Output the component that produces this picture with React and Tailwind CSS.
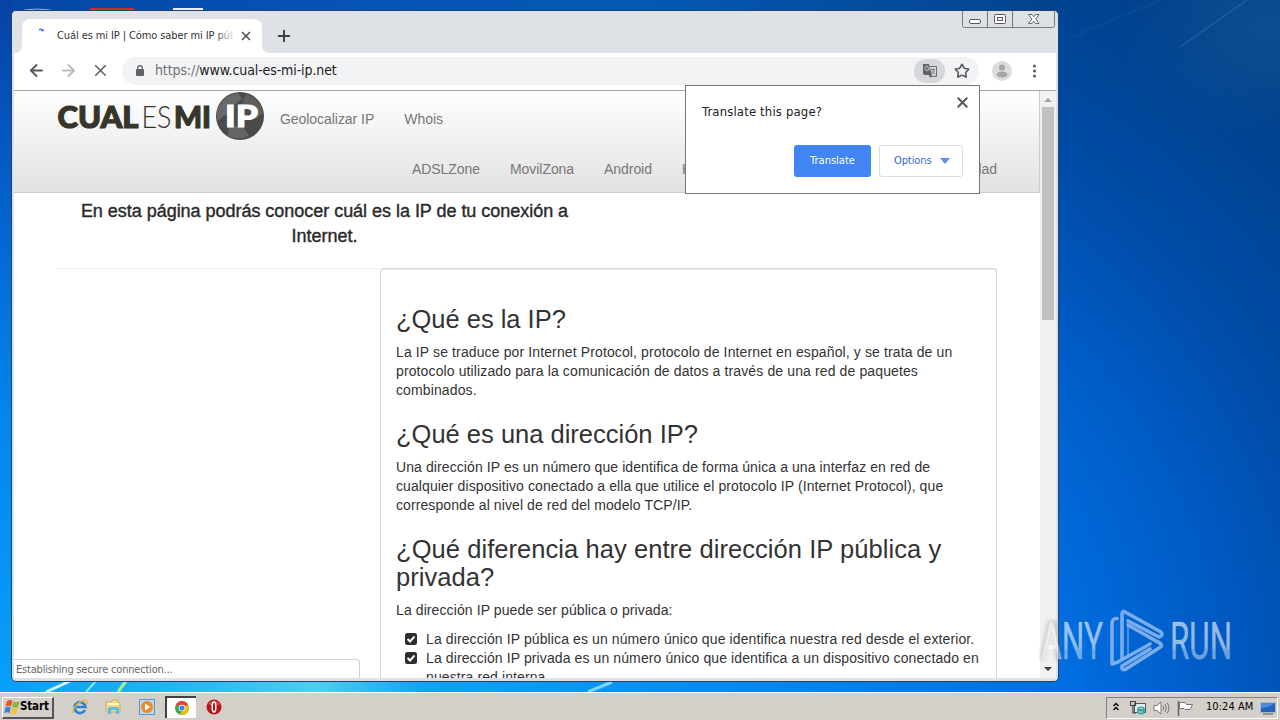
import React from 'react';
import { X, Plus, ArrowLeft, ArrowRight, Star } from 'lucide-react';

const Wallpaper = () => (
  <svg className="absolute inset-0" width="1280" height="692" viewBox="0 0 1280 692">
    <defs>
      <radialGradient id="sky" gradientUnits="userSpaceOnUse" cx="700" cy="700" r="830">
        <stop offset="0" stopColor="#0080f0" />
        <stop offset="0.44" stopColor="#006ee0" />
        <stop offset="0.6" stopColor="#005dc8" />
        <stop offset="0.8" stopColor="#004aa4" />
        <stop offset="1" stopColor="#00418c" />
      </radialGradient>
      <linearGradient id="top" x1="0" x2="1" y1="0" y2="0">
        <stop offset="0" stopColor="#0546a8" />
        <stop offset="0.35" stopColor="#0654b4" />
        <stop offset="0.6" stopColor="#0459b4" />
        <stop offset="1" stopColor="#04438c" />
      </linearGradient>
      <linearGradient id="left" x1="0" x2="0" y1="0" y2="1">
        <stop offset="0" stopColor="#0742a4" />
        <stop offset="0.3" stopColor="#0462cc" />
        <stop offset="0.6" stopColor="#0486ea" />
        <stop offset="1" stopColor="#089ffa" />
      </linearGradient>
      <linearGradient id="bottom" x1="0" x2="1" y1="0" y2="0">
        <stop offset="0" stopColor="#089ffa" />
        <stop offset="0.15" stopColor="#1fb2f2" />
        <stop offset="0.3" stopColor="#4fcdf2" />
        <stop offset="0.4" stopColor="#12a2f4" />
        <stop offset="0.7" stopColor="#0589f0" />
        <stop offset="1" stopColor="#006fe0" />
      </linearGradient>
      <radialGradient id="glow">
        <stop offset="0" stopColor="#2a6a9c" stopOpacity="0.3" />
        <stop offset="1" stopColor="#2a6a9c" stopOpacity="0" />
      </radialGradient>
    </defs>
    <rect width="1280" height="692" fill="url(#sky)" />
    <ellipse cx="1270" cy="30" rx="150" ry="110" fill="url(#glow)" />
    <rect width="1060" height="12" fill="url(#top)" />
    <rect width="12" height="692" fill="url(#left)" />
    <rect y="680" width="1060" height="12" fill="url(#bottom)" />
    <path d="M1180 47L1247 0" stroke="#5a8fc8" strokeOpacity="0.3" strokeWidth="1.5" />
    <path d="M1070 38L1160 0" stroke="#3a78b8" strokeOpacity="0.12" strokeWidth="2" />
    <path d="M46 692L70 681" stroke="#d8f4fc" strokeWidth="3" />
    <path d="M86 692L96 681" stroke="#8fe0f4" strokeWidth="2" />
    <path d="M118 692L126 681" stroke="#b4e88c" strokeWidth="3" />
    <path d="M588 692L612 682" stroke="#7fd4fa" strokeWidth="3" />
    <path d="M24 10Q37 8 50 10" stroke="#9ab4d8" fill="none" />
    <rect x="90" y="8" width="44" height="3" fill="#c8302c" />
    <rect x="173" y="8" width="30" height="3" fill="#e8eef4" />
  </svg>
);

const WindowButtons = () => (
  <svg className="absolute right-0 top-0" width="94" height="18" viewBox="0 0 94 18" fill="none" stroke="#777a82">
    <path d="M0.5 0V14.500Q0.500 16.500 2.500 16.500H90.500Q92.500 16.500 92.500 14.500V0M25.500 0V16.500M50.500 0V16.500" />
    <rect x="7.500" y="8.500" width="11" height="4" rx="1.500" fill="#fff" stroke="#55585f" />
    <rect x="32.500" y="3.500" width="11" height="9" rx="1" fill="#fff" stroke="#55585f" />
    <rect x="35.500" y="6.500" width="5" height="3" stroke="#55585f" />
    <path
      d="M66.500 3.500H70L71.800 5.800L73.500 3.500H77L73.800 8L77 12.500H73.500L71.800 10.200L70 12.500H66.500L69.800 8Z"
      fill="#fff"
      stroke="#666970"
    />
  </svg>
);

const TabStrip = () => (
  <div className="relative h-[42px] bg-[#dee1e6] flex items-end">
    <div className="relative ml-2 w-[240px] h-[34px] bg-white rounded-t-lg flex items-center">
      <svg className="ml-[13px] mb-[2px] shrink-0" width="14" height="14" viewBox="0 0 14 14" fill="none">
        <path d="M4 1.500H7V2.500H9" stroke="#3b78e7" strokeWidth="1.600" />
      </svg>
      <span className="ml-2 w-[176px] overflow-hidden whitespace-nowrap font-['DejaVu_Sans_Condensed','DejaVu_Sans',sans-serif] text-[11px] tracking-[-0.1px] text-[#333]">
        Cuál es mi IP | Cómo saber mi IP púb
      </span>
      <div className="absolute left-[192px] top-2 h-5 w-[22px] bg-linear-to-r from-white/0 to-white" />
      <X className="ml-[6px] shrink-0" size={14} strokeWidth={3} color="#55585c" />
      <svg className="absolute -left-2 bottom-0" width="8" height="8"><path d="M8 0V8H0Q8 8 8 0Z" fill="#fff" /></svg>
      <svg className="absolute -right-2 bottom-0" width="8" height="8"><path d="M0 0V8H8Q0 8 0 0Z" fill="#fff" /></svg>
    </div>
    <Plus className="ml-[13px] mb-[8px]" size={18} strokeWidth={2.6} color="#3c4043" />
    <WindowButtons />
  </div>
);

const TranslateIcon = () => (
  <svg width="16" height="16" viewBox="0 0 16 16" fill="none">
    <path d="M7.500 3.500H14.500V13.500H9" stroke="#6a6d71" />
    <path d="M1 1H7L10 12H3Q1 12 1 10Z" fill="#5f6368" />
    <path d="M7.300 5H5.300M7.300 5A2.200 2.200 0 1 1 6.300 3.500" stroke="#d4d6d9" />
    <path d="M9 6.500H13M11 5.500V6.500M12.500 6.500Q12 9 10 10.500M10 8L13 11.500" stroke="#777a7e" />
    <path d="M7 12H10L8 15Z" fill="#5f6368" />
  </svg>
);

const Toolbar = () => (
  <div className="h-[37px] pb-[2px] bg-white flex items-center">
    <ArrowLeft className="ml-[13px]" size={19} strokeWidth={2.4} color="#55585c" />
    <ArrowRight className="ml-[13px]" size={19} strokeWidth={2.4} color="#b9bbbd" />
    <X className="ml-[13px]" size={19} strokeWidth={2.1} color="#5f6368" />
    <div className="ml-[12px] w-[857px] h-[28px] rounded-full bg-[#f1f3f4] flex items-center">
      <svg className="ml-[13px]" width="10" height="14" viewBox="0 0 10 14">
        <rect x="1" y="5" width="8" height="7" rx="1" fill="#5f6368" />
        <path d="M2.700 5.500V4a2.300 2.300 0 0 1 4.600 0V5.500" stroke="#5f6368" strokeWidth="1.300" fill="none" />
      </svg>
      <span className="ml-[10px] whitespace-nowrap font-['DejaVu_Sans_Condensed','DejaVu_Sans',sans-serif] text-[14px] tracking-[-0.11px] text-[#1c1c1c]">
        <span className="text-[#6f7276]">https://</span>www.cual-es-mi-ip.net
      </span>
      <span className="ml-auto w-[31px] h-[24px] rounded-full bg-[#d5d7da] flex items-center justify-center">
        <TranslateIcon />
      </span>
      <Star className="ml-[9px] mr-[9px]" size={16} strokeWidth={2.4} color="#55585c" />
    </div>
    <svg className="ml-[13px]" width="20" height="20" viewBox="0 0 20 20">
      <circle cx="10" cy="10" r="10" fill="#dcdcdc" />
      <circle cx="10" cy="6.500" r="3" fill="#a5a5a5" />
      <ellipse cx="10" cy="13.500" rx="5.500" ry="3" fill="#a5a5a5" />
    </svg>
    <svg className="ml-[20px]" width="5" height="14" viewBox="0 0 5 14" fill="#5f6368">
      <circle cx="2.500" cy="2" r="1.600" />
      <circle cx="2.500" cy="7" r="1.600" />
      <circle cx="2.500" cy="12" r="1.600" />
    </svg>
  </div>
);

const Logo = () => (
  <svg className="shrink-0" width="212" height="50" viewBox="0 0 212 50">
    <g fontFamily="Lato, sans-serif" fontSize="31" fill="#35352a">
      <text x="2.500" y="36.500" fontWeight="900" stroke="#35352a" strokeWidth="1.200" textLength="81" lengthAdjust="spacingAndGlyphs">CUAL</text>
      <text x="86.500" y="36.500" fontWeight="300" textLength="30" lengthAdjust="spacingAndGlyphs">ES</text>
      <text x="119" y="36.500" fontWeight="900" stroke="#35352a" strokeWidth="1.200" textLength="37" lengthAdjust="spacingAndGlyphs">MI</text>
    </g>
    <circle cx="185" cy="25" r="24" fill="#4a4a4a" />
    <path d="M164 15Q171 3 183 2L187 8L179 14L177 26L170 24L163 30Q160 22 164 15Z" fill="#686868" />
    <path d="M191 3Q206 8 208 22L201 28L193 18L187 12Z" fill="#5e5e5e" />
    <path d="M174 34L189 37L194 45Q183 50 173 45Z" fill="#646464" />
    <text x="170" y="36" fontFamily="Lato, sans-serif" fontWeight="900" fontSize="30" fill="#fff" stroke="#fff" textLength="33" lengthAdjust="spacingAndGlyphs">IP</text>
  </svg>
);

const SiteHeader = () => (
  <div className="h-[102px] bg-linear-to-b from-white to-[#e2e2e2] border-b border-r border-[#ccc] text-[14px] text-[#777]">
    <div className="h-[51px] pl-[41px] flex items-start">
      <Logo />
      <span className="ml-[13px] mt-[18px] leading-[20px] tracking-[-0.05px]">Geolocalizar IP</span>
      <span className="ml-[30px] mt-[18px] leading-[20px]">Whois</span>
    </div>
    <div className="h-[50px] pl-[398px] pr-[42px] pt-[17px] flex gap-[30px] leading-[20px] tracking-[-0.06px] whitespace-nowrap">
      <span>ADSLZone</span>
      <span>MovilZona</span>
      <span>Android</span>
      <span>HardZone</span>
      <span className="ml-auto">Seguridad</span>
    </div>
  </div>
);

const Check = () => (
  <svg className="mt-[3px] mr-[9px] shrink-0" width="12" height="12" viewBox="0 0 12 12">
    <rect width="12" height="12" rx="2.500" fill="#2d2d2d" />
    <path d="M2.500 6L5 8.500L9.500 3.500" fill="none" stroke="#fff" strokeWidth="1.900" />
  </svg>
);

const Article = () => (
  <div className="w-[617px] h-[420px] shrink-0 rounded-t-[4px] border border-b-0 border-[#d6d6d6] shadow-[inset_0_1px_0_#ececec] pl-[15px] pt-[36px] text-[14px] leading-[19px] tracking-[0.122px] text-[#333] whitespace-nowrap">
    <h2 className="text-[25.5px] leading-[28px] tracking-[-0.02px]">¿Qué es la IP?</h2>
    <p className="mt-[10px]">
      La IP se traduce por Internet Protocol, protocolo de Internet en español, y se trata de un
      <br />
      protocolo utilizado para la comunicación de datos a través de una red de paquetes
      <br />
      combinados.
    </p>
    <h2 className="mt-[20px] text-[25.5px] leading-[28px] tracking-[0px]">¿Qué es una dirección IP?</h2>
    <p className="mt-[10px] tracking-[0.09px]">
      Una dirección IP es un número que identifica de forma única a una interfaz en red de
      <br />
      cualquier dispositivo conectado a ella que utilice el protocolo IP (Internet Protocol), que
      <br />
      corresponde al nivel de red del modelo TCP/IP.
    </p>
    <h2 className="mt-[20px] text-[25.5px] leading-[28px] tracking-[0.06px]">
      ¿Qué diferencia hay entre dirección IP pública y
      <br />
      privada?
    </h2>
    <p className="mt-[10px] tracking-[0.1px]">La dirección IP puede ser pública o privada:</p>
    <ul className="mt-[10px] ml-[9px] tracking-[0.105px]">
      <li className="flex">
        <Check />
        <span>La dirección IP pública es un número único que identifica nuestra red desde el exterior.</span>
      </li>
      <li className="flex">
        <Check />
        <span>
          La dirección IP privada es un número único que identifica a un dispositivo conectado en
          <br />
          nuestra red interna.
        </span>
      </li>
    </ul>
  </div>
);

const Scrollbar = () => (
  <div className="w-[16px] bg-[#f1f1f1] flex flex-col items-center shrink-0">
    <svg className="shrink-0" width="16" height="16"><path d="M4 11L8 7L12 11Z" fill="#a3a3a3" /></svg>
    <div className="w-[12px] h-[213px] bg-[#c1c1c1]" />
    <svg className="mt-auto shrink-0" width="16" height="18"><path d="M4 7L8 11L12 7Z" fill="#404040" /></svg>
  </div>
);

const TranslateBubble = () => (
  <div className="absolute left-[685px] top-[85px] w-[295px] h-[109px] bg-white border border-[#777] font-['DejaVu_Sans_Condensed','DejaVu_Sans',sans-serif]">
    <div className="flex justify-between pl-[16px] pr-[8px] pt-[8px]">
      <span className="mt-[9px] text-[13px] leading-[18px] tracking-[0.15px] text-[#222]">Translate this page?</span>
      <X size={17} strokeWidth={2.7} color="#55585c" />
    </div>
    <div className="flex justify-end gap-[8px] pr-[16px] mt-[24px] text-[11px]">
      <span className="w-[77px] h-[32px] rounded-[3px] bg-[#4285f4] text-white flex items-center justify-center pt-[1px]">Translate</span>
      <span className="w-[84px] h-[32px] rounded-[3px] border border-[#dadce0] text-[#3367d6] flex items-center pl-[14px] tracking-[-0.1px]">
        Options
        <svg className="ml-[9px]" width="10" height="6"><path d="M0 0H10L5 6Z" fill="#5c93e8" /></svg>
      </span>
    </div>
  </div>
);

const BrowserWindow = () => (
  <div className="relative ml-[11px] mt-[10px] w-[1048px] h-[672px] rounded-[5px] border border-[#22436e] bg-[#dee1e6] px-[2px] overflow-hidden flex flex-col">
    <TabStrip />
    <Toolbar />
    <div className="h-[588px] border-t border-[#a5a5a5] flex bg-white">
      <div className="relative w-[1026px] h-[587px] overflow-hidden">
        <SiteHeader />
        <div className="pl-[42px]">
          <h1 className="w-[537px] h-[75px] pt-[6px] text-center text-[18px] leading-[25px] tracking-[-0.03px] text-[#2a2a2a] [-webkit-text-stroke:0.4px_#2a2a2a]">
            En esta página podrás conocer cuál es la IP de tu conexión a
            <br />
            Internet.
          </h1>
          <div className="flex">
            <div className="w-[324px] shrink-0 border-t border-[#eee]" />
            <Article />
          </div>
        </div>
        <div className="absolute left-0 bottom-0 w-[346px] h-[19px] bg-white border-t border-r border-[#d0d0d0] rounded-tr-[4px] pl-[2px] font-['DejaVu_Sans_Condensed','DejaVu_Sans',sans-serif] text-[11px] leading-[19px] tracking-[-0.2px] text-[#666]">
          Establishing secure connection...
        </div>
      </div>
      <Scrollbar />
    </div>
  </div>
);

const Watermark = () => (
  <svg className="absolute left-[1030px] top-[600px]" width="210" height="80" viewBox="0 0 210 80">
    <defs>
      <linearGradient id="wm" x1="0" x2="0" y1="0" y2="1">
        <stop offset="0" stopColor="#fff" stopOpacity="0.62" />
        <stop offset="0.6" stopColor="#fff" stopOpacity="0.55" />
        <stop offset="0.65" stopColor="#fff" stopOpacity="0.42" />
        <stop offset="1" stopColor="#fff" stopOpacity="0.42" />
      </linearGradient>
      <filter id="soft" x="-20%" y="-20%" width="140%" height="140%">
        <feGaussianBlur stdDeviation="2" />
      </filter>
    </defs>
    <path d="M12 60L20 23H25L28 60" fill="none" stroke="#888" strokeOpacity="0.45" strokeWidth="4" filter="url(#soft)" />
    <g fontFamily="Roboto, sans-serif" fontSize="51" fill="url(#wm)" stroke="#fff" strokeOpacity="0.15">
      <text x="11" y="59" textLength="62" lengthAdjust="spacingAndGlyphs">ANY</text>
      <text x="140" y="59" textLength="62" lengthAdjust="spacingAndGlyphs">RUN</text>
    </g>
    <g fill="none" stroke="#8fb9ee" strokeOpacity="0.85" strokeWidth="3.600" strokeLinejoin="round" strokeLinecap="round">
      <path d="M87 18.500Q82 18 82 24V64L88 62L120 44" />
      <path d="M92 58V14Q92 10 96 12.500L131 32Q134 35 129 37L98 21" />
      <path d="M98 26V57" strokeOpacity="0.5" strokeWidth="2" />
      <path d="M98 25L126 41Q135 45 129 48L96 69Q91 71 92 66L120 49" />
    </g>
  </svg>
);

const TaskIcons = () => (
  <>
    <svg className="ml-[18px]" width="16" height="16" viewBox="0 0 16 16" fill="none">
      <path d="M13 11A5.500 5.500 0 1 1 13.500 8H4" stroke="#2786d8" strokeWidth="2.600" />
      <path d="M1 14C-1 10 9 0 14.500 1.500C15.500 2 15 4 14 5" stroke="#e4b93c" strokeWidth="1.400" />
    </svg>
    <svg className="ml-[17px]" width="16" height="16" viewBox="0 0 16 16">
      <path d="M1 3H6L8 1H13V4H15V13H1Z" fill="#f0d984" stroke="#c8b05c" />
      <path d="M2 5H14" stroke="#fff6c4" strokeWidth="2" />
      <path d="M3 15V10Q3 8 5 8H12Q14 8 14 10V15H11V11H6V15Z" fill="#65b8e0" />
    </svg>
    <svg className="ml-[18px]" width="16" height="16" viewBox="0 0 16 16">
      <rect x="0.500" y="0.500" width="15" height="15" fill="#b9d8f2" stroke="#5d97cd" />
      <circle cx="8" cy="8" r="6" fill="#ef8a1d" />
      <path d="M6 4.500L11.500 8L6 11.500Z" fill="#fff" />
    </svg>
    <div className="ml-[10px] w-[31px] h-[22px] bg-white border-t-2 border-l-2 border-[#404040] flex items-center justify-center">
      <svg width="14" height="14" viewBox="0 0 14 14">
        <circle cx="7" cy="7" r="7" fill="#34a853" />
        <path d="M7 7L1 3.500A7 7 0 0 1 13 3.500Z" fill="#ea4335" />
        <path d="M7 7L13 3.500A7 7 0 0 1 7 14L5 13L9 8Z" fill="#fbbc05" />
        <circle cx="7" cy="7" r="3.300" fill="#fff" />
        <circle cx="7" cy="7" r="2.600" fill="#4285f4" />
      </svg>
    </div>
    <svg className="ml-[10px]" width="16" height="16" viewBox="0 0 16 16">
      <circle cx="8" cy="8" r="7.500" fill="#b5181c" />
      <path d="M2 5Q8 -2 14 5Q8 8 2 5Z" fill="#d8504c" />
      <ellipse cx="8" cy="8" rx="1.800" ry="5" fill="#a81216" stroke="#fff" strokeWidth="1.500" />
    </svg>
  </>
);

const Taskbar = () => (
  <div className="relative h-[28px] bg-[#d4cfc8] border-t border-white flex items-center">
    <div className="ml-[2px] mt-[2px] w-[52px] h-[22px] border-t border-l border-t-white border-l-white border-b-2 border-r-2 border-b-[#555] border-r-[#555] flex items-center">
      <svg className="ml-[1px] shrink-0" width="16" height="16" viewBox="0 0 16 16">
        <path d="M3 2Q6 0 8.500 2L7 7.500Q4.500 6 1.500 7.500Z" fill="#e2582a" />
        <path d="M9.500 2.500Q12 4 15.500 2.500L14 8Q11 9.500 8 8Z" fill="#7dba3c" />
        <path d="M1.500 8.500Q4 7 6.800 8.500L5.500 14Q3 12.500 0 14Z" fill="#3b82d0" />
        <path d="M7.800 9Q10.500 10.500 13.700 9L12.300 14.500Q9.500 16 6.300 14.500Z" fill="#f5c230" />
      </svg>
      <span className="font-['DejaVu_Sans_Condensed','DejaVu_Sans',sans-serif] font-bold text-[11.5px] tracking-[-0.15px] text-black">Start</span>
    </div>
    <TaskIcons />
    <div className="ml-auto mr-[2px] mt-[2px] w-[172px] h-[22px] border-t border-l border-t-[#808080] border-l-[#808080] border-b border-r border-b-white border-r-white flex items-center">
      <svg className="ml-[5px] mb-[2px]" width="8" height="10" viewBox="0 0 8 10" fill="none" stroke="#000" strokeWidth="1.300">
        <path d="M1.500 4L4 1.500L6.500 4M1.500 8L4 5.500L6.500 8" />
      </svg>
      <svg className="ml-[10px]" width="16" height="16" viewBox="0 0 16 16">
        <rect x="4.500" y="3.500" width="11" height="9" fill="#d9efe9" stroke="#49605e" />
        <circle cx="11" cy="10.500" r="4" fill="#3f9f98" />
        <path d="M9 9Q11 7 13 9M8 12H13" stroke="#b6e4dc" fill="none" />
        <path d="M0.500 1.500H5.500V5.500H0.500ZM3 5.500V13H6" fill="none" stroke="#444" strokeWidth="1.200" />
      </svg>
      <svg className="ml-[7px]" width="17" height="16" viewBox="0 0 17 16" fill="none" stroke="#777">
        <path d="M1 5.500H4L8 2V14L4 10.500H1Z" fill="#fff" />
        <path d="M10 6Q11.500 8 10 10M12 4Q14.500 8 12 12M14 2.500Q18 8 14 13.500" />
      </svg>
      <svg className="ml-[7px]" width="17" height="16" viewBox="0 0 17 16">
        <path d="M1.500 1V16" stroke="#666" strokeWidth="1.500" />
        <path d="M2.500 2.500H8L9.500 4.500H15.500L13 9.500H8L7 8.500H2.500Z" fill="#fff" stroke="#777" />
      </svg>
      <span className="ml-[12px] font-['DejaVu_Sans_Condensed','DejaVu_Sans',sans-serif] text-[11px] tracking-[0.05px] whitespace-nowrap text-black">10:24 AM</span>
      <svg className="ml-auto mr-[1px]" width="16" height="14" viewBox="0 0 16 14">
        <rect x="0.500" y="1.500" width="15" height="10" fill="#2563b8" stroke="#a6b8d0" />
        <path d="M1 7Q8 7 15 2H1Z" fill="#4c8cdc" />
        <path d="M3 13H13" stroke="#555" />
      </svg>
    </div>
  </div>
);

const App = () => (
  <div className="relative w-[1280px] h-[720px] overflow-hidden font-['Liberation_Sans',Arial,sans-serif]">
    <div className="relative h-[692px] overflow-hidden">
      <Wallpaper />
      <div className="flex">
        <BrowserWindow />
      </div>
    </div>
    <Taskbar />
    <TranslateBubble />
    <Watermark />
  </div>
);

export default App;
